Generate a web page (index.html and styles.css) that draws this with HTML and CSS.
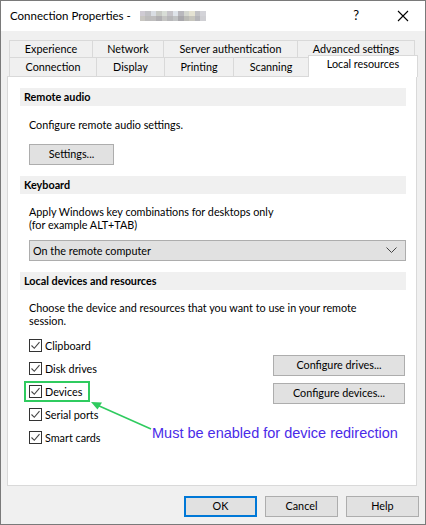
FILE: index.html
```html
<!DOCTYPE html>
<html>
<head>
<meta charset="utf-8">
<link rel="stylesheet" href="styles.css">
</head>
<body>
<div class="window">
  <div class="titlebar">
    <span class="title">Connection Properties - </span>
    <span class="mosaic">
      <i style="background:#cfcbd3"></i><i style="background:#c2c2c6"></i><i style="background:#d9dde3"></i><i style="background:#c7c9c4"></i><i style="background:#d8ddd6"></i><i style="background:#c6c4c9"></i><i style="background:#dfe4ea"></i><i style="background:#b9b8bd"></i><i style="background:#d4d6cf"></i><i style="background:#e4e2d2"></i><i style="background:#c1c1c4"></i><i style="background:#d3d3d8"></i>
      <i style="background:#c8c6c1"></i><i style="background:#bdbcbc"></i><i style="background:#bebdbd"></i><i style="background:#b0afb2"></i><i style="background:#c4c4c2"></i><i style="background:#b7b7b9"></i><i style="background:#c1c3c4"></i><i style="background:#a9a8ac"></i><i style="background:#bbbbb6"></i><i style="background:#c6c5bd"></i><i style="background:#b5b5b9"></i><i style="background:#cfcfd3"></i>
    </span>
    <span class="spacer"></span>
    <span class="help">?</span>
    <svg class="close" width="12" height="12" viewBox="0 0 12 12"><path d="M1 1 L11 11 M11 1 L1 11" stroke="#000" stroke-width="1.1" fill="none"/></svg>
  </div>

  <div class="content">
    <div class="tabs">
      <div class="tabrow row1">
        <div class="tab t-exp">Experience</div>
        <div class="tab t-net">Network</div>
        <div class="tab t-srv">Server authentication</div>
        <div class="tab t-adv last">Advanced settings</div>
      </div>
      <div class="tabrow row2">
        <div class="tab t-con">Connection</div>
        <div class="tab t-dis">Display</div>
        <div class="tab t-pri">Printing</div>
        <div class="tab t-sca">Scanning</div>
        <div class="tab t-loc selected">Local resources</div>
      </div>
    </div>

    <div class="panel">
      <div class="section">
        <div class="sec-head">Remote audio</div>
        <div class="sec-body">
          <p class="text first">Configure remote audio settings.</p>
          <div class="btn btn-settings">Settings...</div>
        </div>
      </div>

      <div class="section">
        <div class="sec-head">Keyboard</div>
        <div class="sec-body">
          <p class="text">Apply Windows key combinations for desktops only<br>(for example ALT+TAB)</p>
          <div class="select">
            <span>On the remote computer</span>
            <svg width="11" height="7" viewBox="0 0 11 7"><path d="M0.5 0.5 L5.5 5.5 L10.5 0.5" stroke="#444" stroke-width="1" fill="none"/></svg>
          </div>
        </div>
      </div>

      <div class="section">
        <div class="sec-head">Local devices and resources</div>
        <div class="sec-body">
          <p class="text">Choose the device and resources that you want to use in your remote<br>session.</p>
          <div class="devices">
            <div class="checks">
              <div class="check"><span class="box"><svg width="11" height="11" viewBox="0 0 11 11"><path d="M1.5 5.5 L4.3 8.3 L9.5 2.2" stroke="#444" stroke-width="1.1" fill="none"/></svg></span>Clipboard</div>
              <div class="check"><span class="box"><svg width="11" height="11" viewBox="0 0 11 11"><path d="M1.5 5.5 L4.3 8.3 L9.5 2.2" stroke="#444" stroke-width="1.1" fill="none"/></svg></span>Disk drives</div>
              <div class="check"><span class="box"><svg width="11" height="11" viewBox="0 0 11 11"><path d="M1.5 5.5 L4.3 8.3 L9.5 2.2" stroke="#444" stroke-width="1.1" fill="none"/></svg></span>Devices</div>
              <div class="check"><span class="box"><svg width="11" height="11" viewBox="0 0 11 11"><path d="M1.5 5.5 L4.3 8.3 L9.5 2.2" stroke="#444" stroke-width="1.1" fill="none"/></svg></span>Serial ports</div>
              <div class="check"><span class="box"><svg width="11" height="11" viewBox="0 0 11 11"><path d="M1.5 5.5 L4.3 8.3 L9.5 2.2" stroke="#444" stroke-width="1.1" fill="none"/></svg></span>Smart cards</div>
            </div>
            <div class="config">
              <div class="btn btn-config">Configure drives...</div>
              <div class="btn btn-config">Configure devices...</div>
            </div>
          </div>
        </div>
      </div>
    </div>

    <div class="footer">
      <div class="btn btn-foot default">OK</div>
      <div class="btn btn-foot">Cancel</div>
      <div class="btn btn-foot">Help</div>
    </div>
  </div>

  <div class="highlight"></div>
  <svg class="arrow" width="80" height="40" viewBox="0 0 80 40">
    <path d="M62 32 L8 8" stroke="#2fcb5f" stroke-width="1.6" fill="none"/>
    <path d="M2 5 L13 5.5 L8.5 12.5 Z" fill="#2fcb5f"/>
  </svg>
  <div class="note">Must be enabled for device redirection</div>
</div>
</body>
</html>
```

FILE: styles.css
```css
* { box-sizing: border-box; }

html, body {
  margin: 0;
  padding: 0;
  background: #ffffff;
}

body {
  font-family: Lato, "Noto Sans", "Liberation Sans", sans-serif;
  font-size: 10.8px;
  color: #000;
}

.window {
  position: relative;
  width: 426px;
  height: 525px;
  border: 1px solid #7a7a7a;
  background: #f0f0f0;
  display: flex;
  flex-direction: column;
}

.titlebar {
  height: 30px;
  background: #ffffff;
  display: flex;
  align-items: center;
  padding-left: 9px;
  padding-right: 16px;
  font-size: 11.5px;
}

.title {
  white-space: pre;
  margin-top: -1px;
}

.mosaic {
  display: grid;
  grid-template-columns: repeat(12, 5.5px);
  grid-auto-rows: 5px;
  margin-left: 6px;
  margin-top: -1px;
}

.mosaic i {
  display: block;
}

.spacer { flex: 1; }

.help {
  font-size: 13px;
  margin-right: 38px;
  margin-top: -2px;
}

.close {
  margin-top: -1px;
}

.content {
  flex: 1;
  padding: 9px 0 0 6px;
  display: flex;
  flex-direction: column;
}

.tabs {
  display: flex;
  flex-direction: column;
  margin-left: 2px;
}

.tabrow {
  display: flex;
}

.tab {
  border: 1px solid #d9d9d9;
  border-right: none;
  border-bottom: none;
  background: #f0f0f0;
  text-align: center;
  line-height: 16px;
  white-space: nowrap;
}

.tab.last { border-right: 1px solid #d9d9d9; }

.row1 .tab { height: 17px; }
.row2 .tab { height: 19px; line-height: 18px; }

.t-exp { width: 83px; }
.t-net { width: 71px; }
.t-srv { width: 134px; }
.t-adv { width: 118px; }
.t-con { width: 87px; }
.t-dis { width: 68px; }
.t-pri { width: 69px; }
.t-sca { width: 75px; }

.tab.selected {
  position: relative;
  z-index: 2;
  width: 110px;
  height: 22px;
  margin-top: -2px;
  margin-bottom: -1px;
  background: #ffffff;
  border-right: 1px solid #d9d9d9;
  line-height: 16px;
}

.panel {
  width: 410px;
  height: 410px;
  background: #ffffff;
  border: 1px solid #d9d9d9;
  padding: 11px 10px 0 12px;
}

.sec-head {
  height: 18px;
  background: #f0f0f0;
  font-weight: bold;
  padding-left: 4px;
  line-height: 18px;
}

.sec-body {
  padding-left: 9px;
}

.text {
  margin: 0;
  padding-top: 11px;
  line-height: 13px;
}

.text.first { padding-top: 12px; }

.btn {
  height: 21px;
  background: #e1e1e1;
  border: 1px solid #adadad;
  display: flex;
  align-items: center;
  justify-content: center;
  line-height: 1;
  padding-bottom: 1px;
}

.btn-settings {
  width: 85px;
  margin-top: 13px;
  margin-bottom: 11px;
}

.select {
  height: 21px;
  margin-top: 9px;
  margin-bottom: 11px;
  background: #e1e1e1;
  border: 1px solid #adadad;
  display: flex;
  align-items: center;
  justify-content: space-between;
  padding: 0 8px 1px 3px;
}

.select svg { margin-top: 1px; }

.devices {
  display: flex;
  justify-content: space-between;
  margin-top: 7px;
}

.checks {
  display: flex;
  flex-direction: column;
}

.check {
  height: 23px;
  display: flex;
  align-items: center;
  white-space: nowrap;
}

.box {
  width: 13px;
  height: 13px;
  border: 1px solid #333;
  background: #fff;
  margin-right: 3px;
  display: flex;
  align-items: center;
  justify-content: center;
}

.config {
  display: flex;
  flex-direction: column;
  gap: 7px;
  padding-top: 21px;
  margin-right: 1px;
}

.btn-config {
  width: 132px;
}

.footer {
  display: flex;
  justify-content: flex-end;
  gap: 8px;
  padding-top: 10px;
  padding-right: 6px;
}

.btn-foot {
  width: 73px;
  height: 21px;
}

.btn-foot.default {
  border: 2px solid #0078d7;
}

.highlight {
  position: absolute;
  left: 23px;
  top: 380px;
  width: 66px;
  height: 21px;
  border: 2px solid #2fcb5f;
}

.arrow {
  position: absolute;
  left: 88px;
  top: 396px;
}

.note {
  position: absolute;
  left: 151px;
  top: 424px;
  font-family: "Liberation Sans", Arial, sans-serif;
  font-size: 14.5px;
  color: #4a2be8;
  white-space: nowrap;
}
```
